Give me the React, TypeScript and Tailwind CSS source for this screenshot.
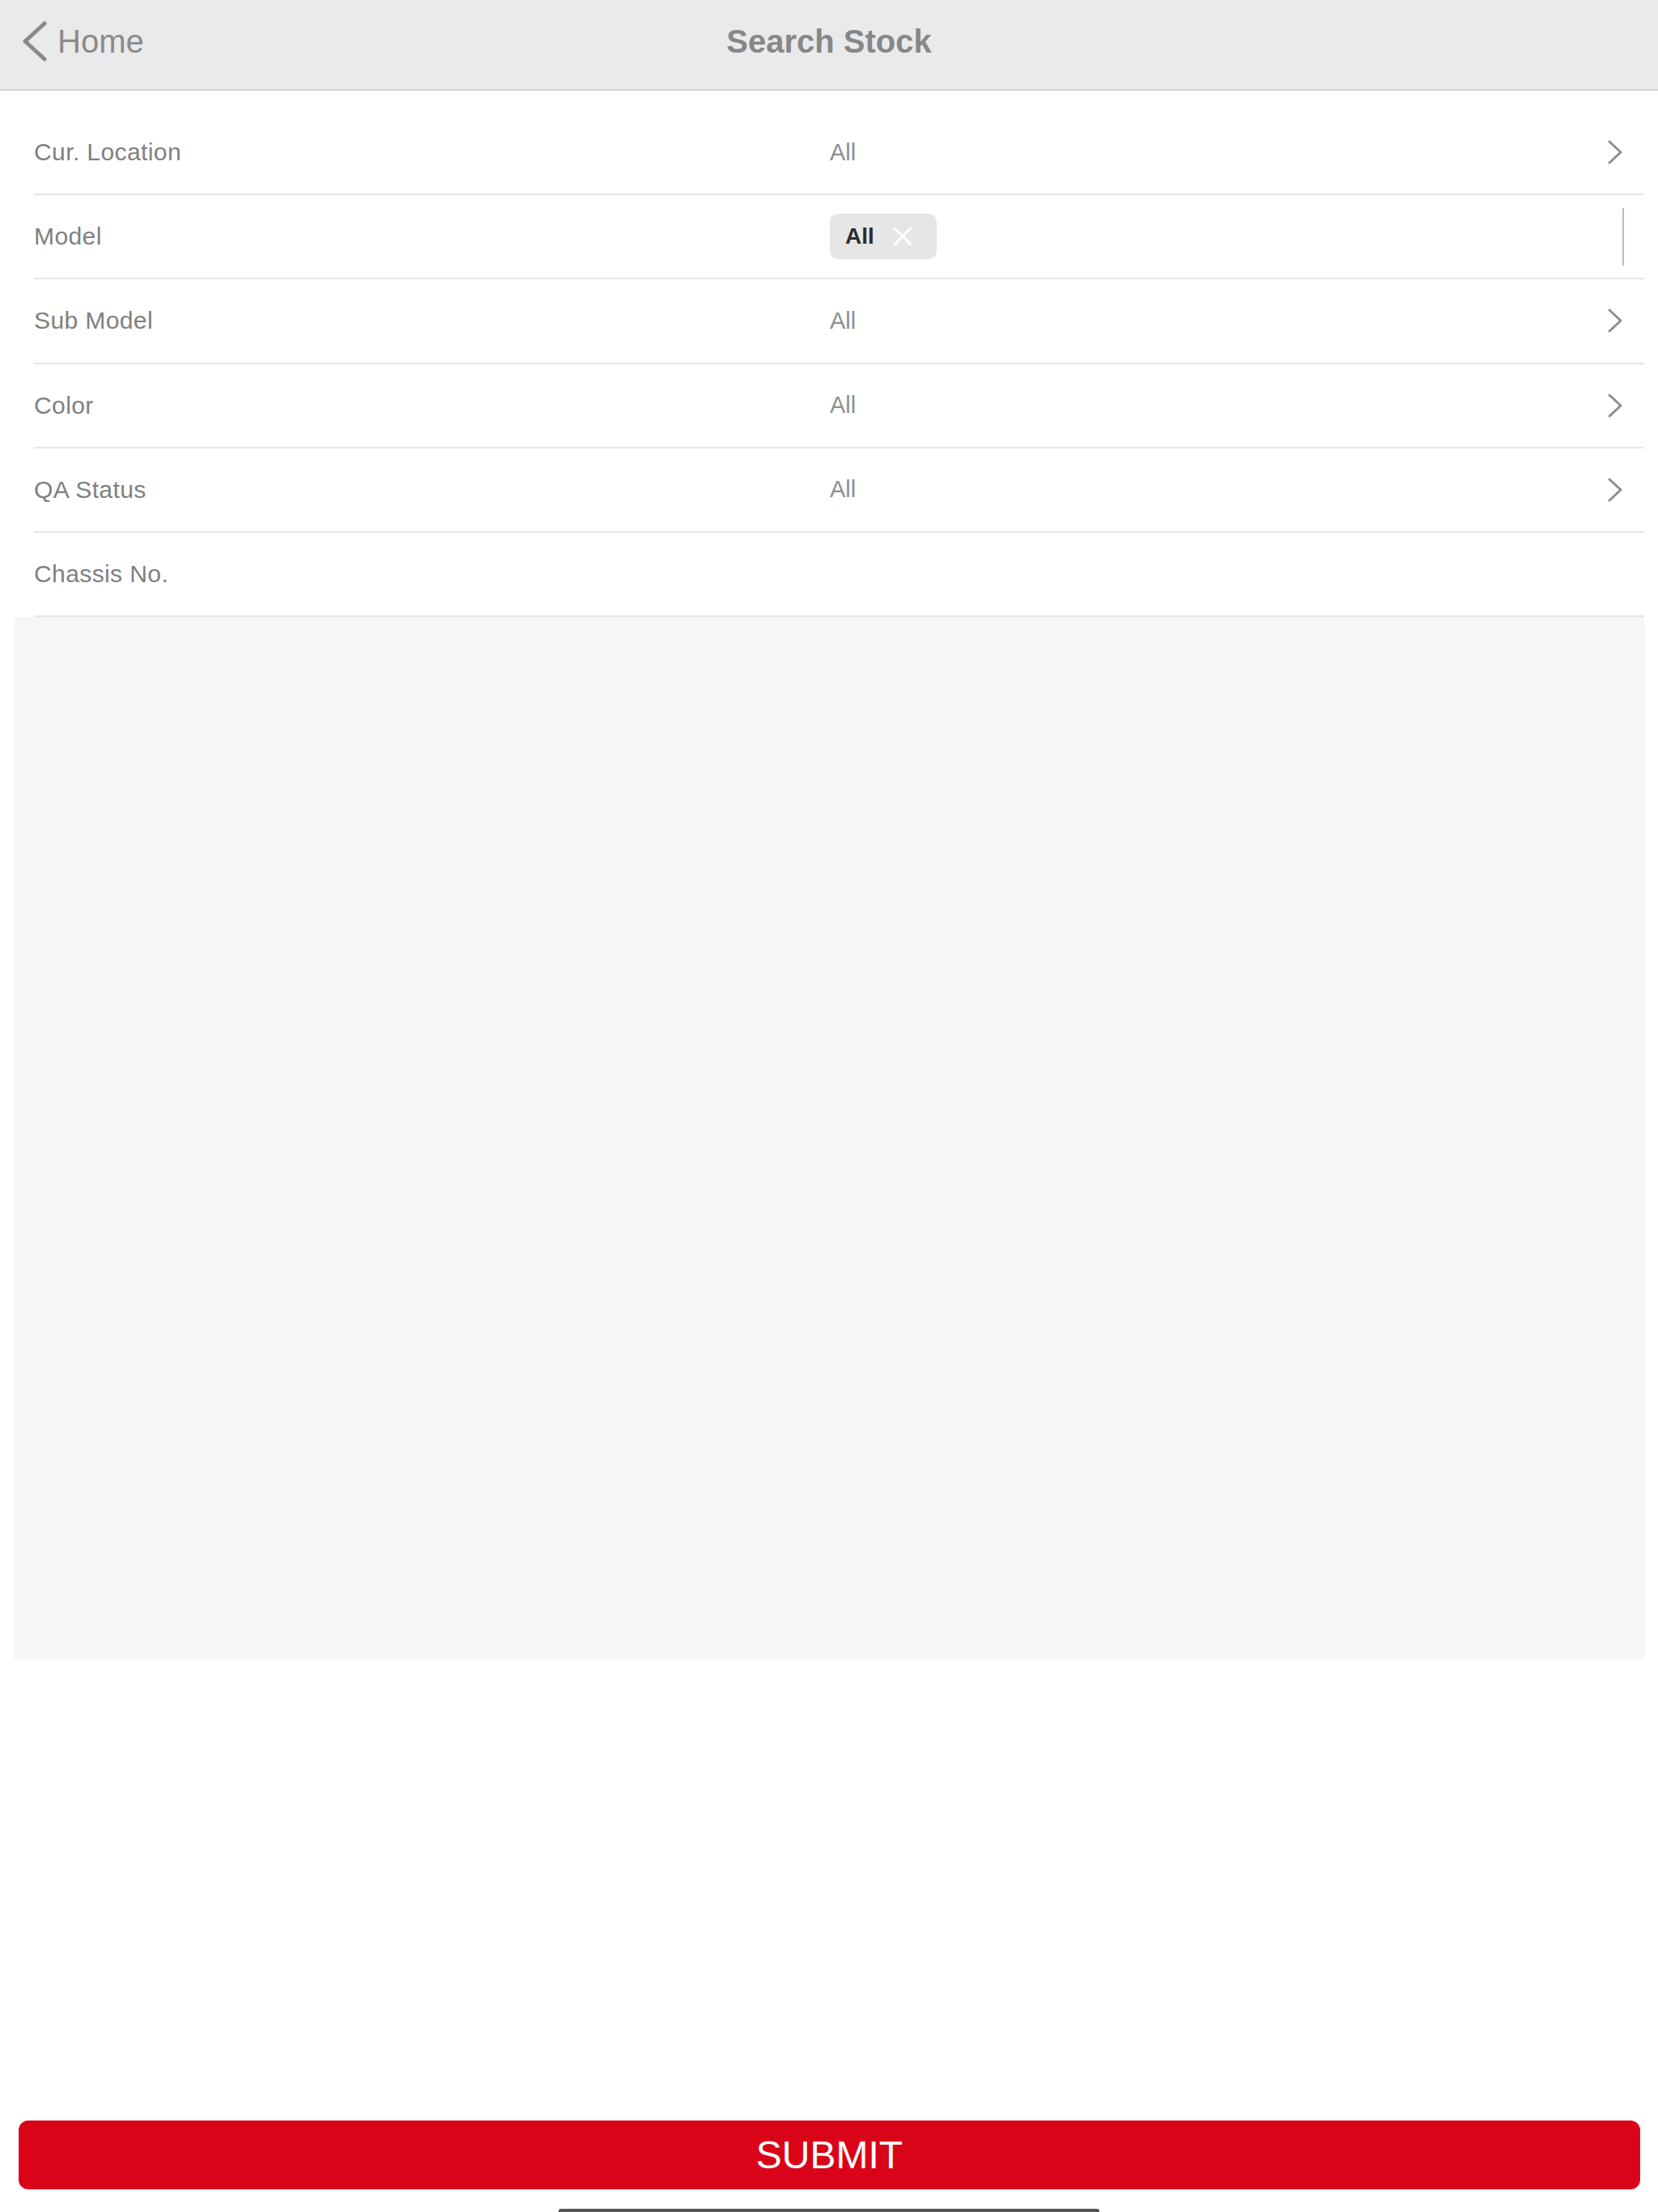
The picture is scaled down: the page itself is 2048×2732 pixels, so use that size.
import React from "react";

type Filter = {
  label: string;
  value?: string;
  kind: "select" | "chips" | "text";
};

const filters: Filter[] = [
  { label: "Cur. Location", value: "All", kind: "select" },
  { label: "Model", value: "All", kind: "chips" },
  { label: "Sub Model", value: "All", kind: "select" },
  { label: "Color", value: "All", kind: "select" },
  { label: "QA Status", value: "All", kind: "select" },
  { label: "Chassis No.", kind: "text" },
];

function ChevronRight() {
  return (
    <svg width="20" height="30" viewBox="0 0 20 30" fill="none">
      <polyline
        points="3,2 17,15 3,28"
        stroke="#8e8e8e"
        strokeWidth="3"
        strokeLinecap="round"
        strokeLinejoin="round"
      />
    </svg>
  );
}

function BackChevron() {
  return (
    <svg width="34" height="50" viewBox="0 0 34 50" fill="none">
      <polyline
        points="29,3 5,25 29,47"
        stroke="#8a8a8a"
        strokeWidth="5"
        strokeLinecap="round"
        strokeLinejoin="round"
      />
    </svg>
  );
}

function Chip({ text }: { text: string }) {
  return (
    <div className="inline-flex h-[56px] items-center rounded-[10px] bg-[#e6e6e6] pl-[19px] pr-[28px]">
      <span className="text-[28px] font-semibold leading-none text-[#2c2c2c]">
        {text}
      </span>
      <svg width="28" height="22" viewBox="0 0 28 22" className="ml-[21px]">
        <path
          d="M4 1 L24 21 M24 1 L4 21"
          stroke="#ffffff"
          strokeWidth="3"
          strokeLinecap="round"
        />
      </svg>
    </div>
  );
}

function FilterRow({ item }: { item: Filter }) {
  return (
    <div className="flex h-[104.2px] items-center border-b-2 border-[#e6e6e6]">
      <div className="w-[983px] shrink-0 text-[30px] leading-none tracking-[0.4px] text-[#7f7f7f]">
        {item.label}
      </div>
      <div className="flex flex-1 items-center">
        {item.kind === "select" && (
          <>
            <span className="flex-1 text-[29px] leading-none text-[#8f8f8f]">
              {item.value}
            </span>
            <div className="pr-[26px]">
              <ChevronRight />
            </div>
          </>
        )}
        {item.kind === "chips" && (
          <>
            <div className="flex flex-1 items-center">
              <Chip text={item.value ?? ""} />
            </div>
            <div className="mr-[25px] h-[71px] w-[2px] bg-[#bdbdbd]" />
          </>
        )}
      </div>
    </div>
  );
}

export default function App() {
  return (
    <div className="flex h-[2732px] w-full flex-col overflow-hidden bg-white font-['Liberation_Sans',Arial,sans-serif]">
      {/* nav bar */}
      <div className="grid h-[112px] shrink-0 grid-cols-[1fr_auto_1fr] items-center border-b-2 border-[#d5d5d7] bg-[#e9eaec] pb-[8px]">
        <div className="flex items-center pl-[26px]">
          <BackChevron />
          <span className="ml-[11px] text-[40px] leading-none text-[#8a8a8a]">
            Home
          </span>
        </div>
        <div className="text-[40px] font-bold leading-none text-[#878787]">
          Search Stock
        </div>
        <div />
      </div>

      {/* filter list */}
      <div className="ml-[42px] mr-[17px] mt-[25px]">
        {filters.map((f) => (
          <FilterRow key={f.label} item={f} />
        ))}
      </div>

      {/* results area */}
      <div className="mx-[17px] h-[1288px] shrink-0 bg-[#f6f6f6]" />

      <div className="flex-1" />

      <button className="ml-[23px] mr-[22px] flex h-[85px] shrink-0 items-center justify-center rounded-[12px] bg-[#d90418] text-[48px] leading-none text-white">
        SUBMIT
      </button>

      <div className="mx-auto mt-[24px] h-[4px] w-[668px] shrink-0 rounded-t-[3px] bg-[#555555]" />
    </div>
  );
}
